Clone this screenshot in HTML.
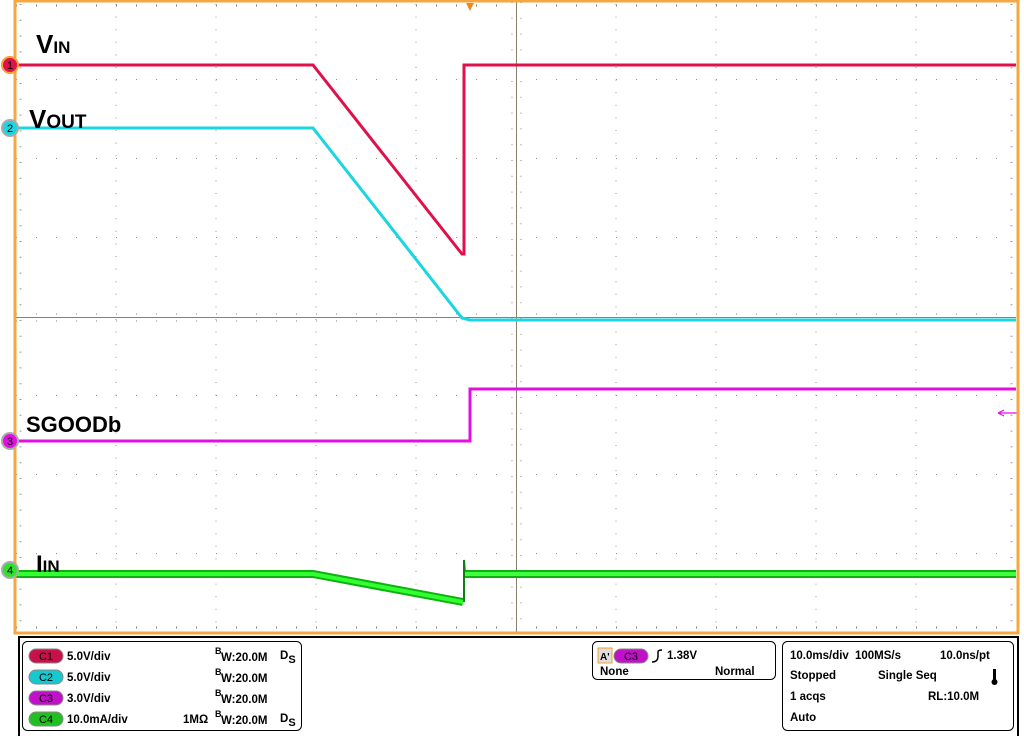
<!DOCTYPE html>
<html><head><style>
body{margin:0;width:1024px;height:736px;background:#fff;overflow:hidden;font-family:"Liberation Sans",sans-serif}
svg text{font-family:"Liberation Sans",sans-serif}
</style></head><body>
<svg width="1024" height="736" viewBox="0 0 1024 736" xmlns="http://www.w3.org/2000/svg">
<g stroke="#9a9080" stroke-width="1" stroke-dasharray="1 11.6">
<line x1="116" y1="4" x2="116" y2="632"/><line x1="216" y1="4" x2="216" y2="632"/><line x1="316" y1="4" x2="316" y2="632"/><line x1="416" y1="4" x2="416" y2="632"/>
<line x1="616" y1="4" x2="616" y2="632"/><line x1="716" y1="4" x2="716" y2="632"/><line x1="816" y1="4" x2="816" y2="632"/><line x1="916" y1="4" x2="916" y2="632"/>
</g>
<g stroke="#9a9080" stroke-width="1" stroke-dasharray="1 19">
<line x1="16" y1="79.5" x2="1016" y2="79.5"/><line x1="16" y1="158.5" x2="1016" y2="158.5"/><line x1="16" y1="237.5" x2="1016" y2="237.5"/>
<line x1="16" y1="395.5" x2="1016" y2="395.5"/><line x1="16" y1="474.5" x2="1016" y2="474.5"/><line x1="16" y1="553.5" x2="1016" y2="553.5"/>
</g>
<line x1="16" y1="317.5" x2="1016" y2="317.5" stroke="#8a8070"/>
<line x1="516.5" y1="2" x2="516.5" y2="632" stroke="#8a8070"/>
<g stroke="#8a8070">
<line x1="16" y1="314" x2="1016" y2="314" stroke-dasharray="1 19"/>
<line x1="16" y1="321" x2="1016" y2="321" stroke-dasharray="1 19"/>
<line x1="512" y1="2" x2="512" y2="632" stroke-dasharray="1 14.8"/>
<line x1="521" y1="2" x2="521" y2="632" stroke-dasharray="1 14.8"/>
<line x1="16" y1="5" x2="1016" y2="5" stroke-dasharray="1 19"/>
<line x1="16" y1="6" x2="1016" y2="6" stroke-dasharray="1 19"/>
<line x1="16" y1="627" x2="1016" y2="627" stroke-dasharray="1 19"/>
<line x1="16" y1="628" x2="1016" y2="628" stroke-dasharray="1 19"/>
<line x1="17" y1="2" x2="23" y2="2" stroke-dasharray="none" opacity="0"/>
</g>
<g stroke="#8a8070" stroke-width="6" stroke-dasharray="1 14.8" opacity="0.8">
<line x1="20" y1="4" x2="20" y2="632" stroke-width="1"/>
<line x1="21" y1="4" x2="21" y2="632" stroke-width="1"/>
<line x1="1011" y1="4" x2="1011" y2="632" stroke-width="1"/>
<line x1="1012" y1="4" x2="1012" y2="632" stroke-width="1"/>
</g>
<!-- traces -->
<polyline points="16,65 313,65 462,254 464,254 464,65 1016,65" fill="none" stroke="#e0104a" stroke-width="3"/>
<polyline points="16,128 313,128 462,318 470,320 1016,320" fill="none" stroke="#19d6e0" stroke-width="3"/>
<polyline points="16,441 470,441 470,389 1016,389" fill="none" stroke="#e010e0" stroke-width="3"/>
<polyline points="16,574 313,574 463,602" fill="none" stroke="#10b010" stroke-width="8"/>
<polyline points="16,574 313,574 463,602" fill="none" stroke="#30ff30" stroke-width="4"/>
<polyline points="464,602 464,560 465,574" fill="none" stroke="#108010" stroke-width="2"/>
<line x1="465" y1="574" x2="1016" y2="574" stroke="#10b010" stroke-width="8"/>
<line x1="465" y1="574" x2="1016" y2="574" stroke="#40ff40" stroke-width="4"/>
<path d="M998 413 L1018 413 M998 413 L1004 410 M998 413 L1004 416" stroke="#e010e0" stroke-width="1.2"/>
<path d="M466 3 L474 3 L470 11 Z" fill="#f08a20"/>
<rect x="15" y="1" width="1003" height="632" fill="none" stroke="#f5a840" stroke-width="3"/>
<g font-size="11" text-anchor="middle">
<circle cx="10" cy="65" r="8" fill="#e0104a" stroke="#f5a030" stroke-width="2"/><text x="10" y="69">1</text>
<circle cx="10" cy="128" r="8" fill="#19d6e0" stroke="#aaa" stroke-width="2"/><text x="10" y="132">2</text>
<circle cx="10" cy="441" r="8" fill="#e010e0" stroke="#aaa" stroke-width="2"/><text x="10" y="445">3</text>
<circle cx="10" cy="570" r="8" fill="#30e030" stroke="#aaa" stroke-width="2"/><text x="10" y="574">4</text>
</g>
<g font-weight="bold" fill="#000">
<text x="36" y="53" font-size="26">V<tspan font-size="17">IN</tspan></text>
<text x="29" y="128" font-size="26">V<tspan font-size="19">OUT</tspan></text>
<text x="26" y="432" font-size="22">SGOODb</text>
<text x="36" y="572" font-size="24">I<tspan font-size="17">IN</tspan></text>
</g>
<rect x="19" y="637" width="999" height="100" fill="none" stroke="#000" stroke-width="2"/>
<rect x="22.5" y="641.5" width="279" height="89" rx="5" fill="none" stroke="#000"/>
<rect x="592.5" y="641.5" width="183" height="38" rx="5" fill="none" stroke="#000"/>
<rect x="782.5" y="641.5" width="231" height="89" rx="5" fill="none" stroke="#000"/>
<g font-size="11" text-anchor="middle" fill="#000">
<rect x="29" y="649" width="34" height="14" rx="7" fill="#c8104a" stroke="#888"/><text x="46" y="660">C1</text>
<rect x="29" y="670" width="34" height="14" rx="7" fill="#18c8d0" stroke="#888"/><text x="46" y="681">C2</text>
<rect x="29" y="691" width="34" height="14" rx="7" fill="#c010c8" stroke="#888"/><text x="46" y="702">C3</text>
<rect x="29" y="712" width="34" height="14" rx="7" fill="#20c020" stroke="#888"/><text x="46" y="723">C4</text>
<rect x="614" y="649" width="34" height="14" rx="7" fill="#c010c8" stroke="#888"/><text x="631" y="660">C3</text>
</g>
<rect x="598" y="648" width="14" height="15" fill="#ddd" stroke="#f5a030"/>
<g font-size="11.5" font-weight="bold" fill="#000">
<text x="600" y="660" font-size="10">A'</text>
<text x="67" y="660">5.0V/div</text><text x="67" y="681">5.0V/div</text><text x="67" y="702">3.0V/div</text><text x="67" y="723">10.0mA/div</text>
<text x="183" y="723">1MΩ</text>
<text x="215" y="654" font-size="9">B</text><text x="221" y="661">W:20.0M</text>
<text x="215" y="675" font-size="9">B</text><text x="221" y="682">W:20.0M</text>
<text x="215" y="696" font-size="9">B</text><text x="221" y="703">W:20.0M</text>
<text x="215" y="717" font-size="9">B</text><text x="221" y="724">W:20.0M</text>
<text x="280" y="659">D<tspan font-size="11" dy="4">S</tspan></text>
<text x="280" y="722">D<tspan font-size="11" dy="4">S</tspan></text>
<text x="667" y="659">1.38V</text>
<text x="600" y="675">None</text><text x="715" y="675">Normal</text>
<text x="790" y="659">10.0ms/div</text><text x="855" y="659">100MS/s</text><text x="940" y="659">10.0ns/pt</text>
<text x="790" y="679">Stopped</text><text x="878" y="679">Single Seq</text>
<text x="790" y="700">1 acqs</text><text x="928" y="700">RL:10.0M</text>
<text x="790" y="721">Auto</text>
</g>
<path d="M652 662 Q658 662 658 656 V652 Q658 650 662 650" fill="none" stroke="#000" stroke-width="1.5"/>
<rect x="993" y="669" width="3" height="12" fill="#000"/><circle cx="994.5" cy="682" r="3" fill="#000"/>
</svg>
</body></html>
